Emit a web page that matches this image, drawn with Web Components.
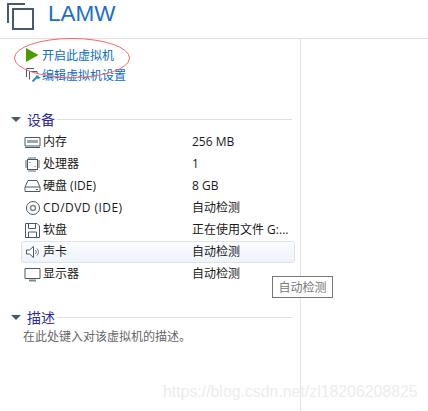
<!DOCTYPE html>
<html><head><meta charset="utf-8">
<style>html,body{margin:0;padding:0;background:#fff;width:428px;height:411px;overflow:hidden}
body{font-family:"Open Sans","Noto Sans CJK SC",sans-serif;}</style>
</head><body>
<template id="t-panel"><style>
:host{display:block;position:relative;width:428px;height:411px;overflow:hidden;background:#fff}
.head{height:38px;border-bottom:1px solid #e2e2e2;display:flex;align-items:flex-start;box-sizing:content-box}
.main{display:grid;grid-template-columns:301px 1fr;height:372px}
.left{border-right:1px solid #e2e2e2;box-sizing:border-box;padding-top:6px}
.actions{padding-left:26px;display:flex;flex-direction:column;gap:0}
.sec1{margin-top:24px}.sec2{margin-top:22px}
.rows{padding:2px 5px 0 21px;display:flex;flex-direction:column}
svg.ell{position:absolute;left:13px;top:37px}
.tip{position:absolute;left:272px;top:276px;width:59px;height:20px;border:1px solid #777;background:#fff;color:#777;font:12px/20px "Noto Sans CJK SC",sans-serif;text-align:center}
.wm{position:absolute;left:163px;top:381px;font:15.85px/22px "Liberation Sans",sans-serif;color:#ececec;white-space:nowrap}
.desc{font:12px/16px "Noto Sans CJK SC",sans-serif;color:#666;padding-left:23px;margin-top:1px}
</style>
<div class="head"><vm-title>LAMW</vm-title></div>
<div class="main"><div class="left">
<div class="actions">
<vm-action><svg slot="icon" width="14" height="14" viewBox="0 0 14 14"><path d="M0 0L12.500 7 0 14z" fill="#4e9a06"/></svg>开启此虚拟机</vm-action>
<vm-action><svg slot="icon" width="16" height="14" viewBox="0 0 16 14"><path d="M.5 9V.5H8M3.500 11.500V3.500H11V5.500" fill="none" stroke="#4a5a66" stroke-width="1"/><path d="M6.500 13.500L11 9" stroke="#1b8fd6" stroke-width="2"/><path d="M10 7.500a2.500 2.500 0 0 0 3.500 3l1-1.500-1.500 0-.5-1.500z" fill="#1b8fd6"/></svg>编辑虚拟机设置</vm-action>
</div>
<div class="sec1"><vm-section>设备</vm-section></div>
<div class="rows">
<vm-row label="内存" value="256 MB"><svg slot="icon" width="17" height="14" viewBox="0 0 17 14"><path d="M1 2.500H16V11H1z" fill="#fff" stroke="#4a5a66"/><path d="M3 5H14V8H3z" fill="#9aa5ad"/><path d="M1 12.500H16" stroke="#4a5a66"/></svg></vm-row>
<vm-row label="处理器" value="1"><svg slot="icon" width="17" height="17" viewBox="0 0 17 17"><rect x="3.500" y="3.500" width="10" height="10" fill="#fff" stroke="#4a5a66"/><path d="M5 1v2M7 1v2M9 1v2M11 1v2M5 14v2M7 14v2M9 14v2M11 14v2M1 5h2M1 7h2M1 9h2M1 11h2M14 5h2M14 7h2M14 9h2M14 11h2" stroke="#5f6c75"/><path d="M5.500 6h1v1h-1zM10.500 10h1v1h-1z" fill="#4a5a66"/></svg></vm-row>
<vm-row label="硬盘 (IDE)" value="8 GB"><svg slot="icon" width="17" height="14" viewBox="0 0 17 14"><path d="M4 1.500H13L16 8V12.500H1V8z M1 8H16" fill="#fff" stroke="#4a5a66"/><path d="M12 10.500h2" stroke="#4a5a66"/></svg></vm-row>
<vm-row label="CD/DVD (IDE)" value="自动检测" style="--ls:.45px"><svg slot="icon" width="16" height="16" viewBox="0 0 16 16"><circle cx="8" cy="8" r="6.500" fill="#fff" stroke="#4a5a66"/><circle cx="8" cy="8" r="2.500" fill="#fff" stroke="#7d8991" stroke-width="1.500"/></svg></vm-row>
<vm-row label="软盘" value="正在使用文件 G:..."><svg slot="icon" width="17" height="17" viewBox="0 0 17 17"><path d="M1.500 1.500H13L15.500 4V15.500H1.500z" fill="#fff" stroke="#4a5a66"/><path d="M4.500 2V6.500H11.500V2M4.500 15V10H12.500V15" fill="none" stroke="#4a5a66"/></svg></vm-row>
<vm-row label="声卡" value="自动检测" hot><svg slot="icon" width="14" height="14" viewBox="0 0 14 14"><path d="M.5 5H3.500L7.500 1.500V12.500L3.500 9H.5z" fill="#fff" stroke="#4a5a66"/><path d="M9.500 5a3 3 0 0 1 0 4M11 3.500a5 5 0 0 1 0 7" fill="none" stroke="#7d8991"/></svg></vm-row>
<vm-row label="显示器" value="自动检测"><svg slot="icon" width="17" height="15" viewBox="0 0 17 15"><path d="M1 1.500H16V11.500H1z" fill="#fff" stroke="#4a5a66"/><path d="M5 13.500H12" stroke="#7d8991" stroke-width="2"/></svg></vm-row>
</div>
<div class="sec2"><vm-section>描述</vm-section></div>
<div class="desc">在此处键入对该虚拟机的描述。</div>
</div><div></div></div>
<svg class="ell" width="120" height="42" viewBox="0 0 120 42"><ellipse cx="59" cy="21" rx="57.500" ry="19.500" fill="none" stroke="#f06a6a" stroke-width="1"/></svg>
<div class="tip">自动检测</div>
<div class="wm">https://blog.csdn.net/zl18206208825</div>
</template>

<template id="t-title"><style>
:host{display:flex;align-items:flex-start;height:38px;padding-left:7px}
svg{margin-top:2px}
.t{font:22.500px/28px "Liberation Sans",sans-serif;color:#1a6fcb;margin-left:13px}
</style>
<svg width="28" height="28" viewBox="0 0 28 28"><path d="M1 21V2H18" fill="none" stroke="#48596a" stroke-width="2"/><rect x="6" y="7" width="20" height="20" fill="none" stroke="#48596a" stroke-width="2"/></svg>
<span class="t"><slot></slot></span></template>

<template id="t-action"><style>
:host{display:flex;align-items:center;height:20px;color:#0a6cc4;font:12px/20px "Noto Sans CJK SC",sans-serif;white-space:nowrap}
.i{width:16px;display:flex;justify-content:flex-start;align-items:center;margin-right:0}
</style><span class="i"><slot name="icon"></slot></span><slot></slot></template>

<template id="t-section"><style>
:host{display:flex;align-items:center;height:20px;padding-left:11px;width:292px;box-sizing:border-box;color:#2d2a9e;font:14px/20px "Noto Sans CJK SC",sans-serif}
.a{width:0;height:0;border-left:5px solid transparent;border-right:5px solid transparent;border-top:5px solid #48596a;margin-right:6px}
.l{flex:1;height:1px;background:#e0e0e0;margin-left:2px}
</style><span class="a"></span><slot></slot><span class="l"></span></template>

<template id="t-row"><style>
:host{display:grid;grid-template-columns:170px 1fr;align-items:center;height:22px;box-sizing:border-box;color:#1a1a1a;font:12px/20px "Open Sans","Noto Sans CJK SC",sans-serif;white-space:nowrap;border:1px solid transparent;border-radius:3px}
:host([hot]){border-color:#dfe3e8;background:linear-gradient(#fafbfe,#eef3fb)}
.n{display:flex;align-items:center}
.i{width:21px;display:flex;justify-content:center;align-items:center;flex:none}
#l{letter-spacing:var(--ls,0)}
</style><div class="n"><span class="i"><slot name="icon"></slot></span><span id="l"></span></div><div id="v"></div></template>

<vm-panel></vm-panel>
<script>
function def(name,tid,init){customElements.define(name,class extends HTMLElement{constructor(){super();const r=this.attachShadow({mode:"open"});r.appendChild(document.getElementById(tid).content.cloneNode(true));}
connectedCallback(){init&&init(this)}});}
def("vm-title","t-title");def("vm-action","t-action");def("vm-section","t-section");
def("vm-row","t-row",e=>{e.shadowRoot.getElementById("l").textContent=e.getAttribute("label");e.shadowRoot.getElementById("v").textContent=e.getAttribute("value")});
def("vm-panel","t-panel");
</script>
</body></html>
